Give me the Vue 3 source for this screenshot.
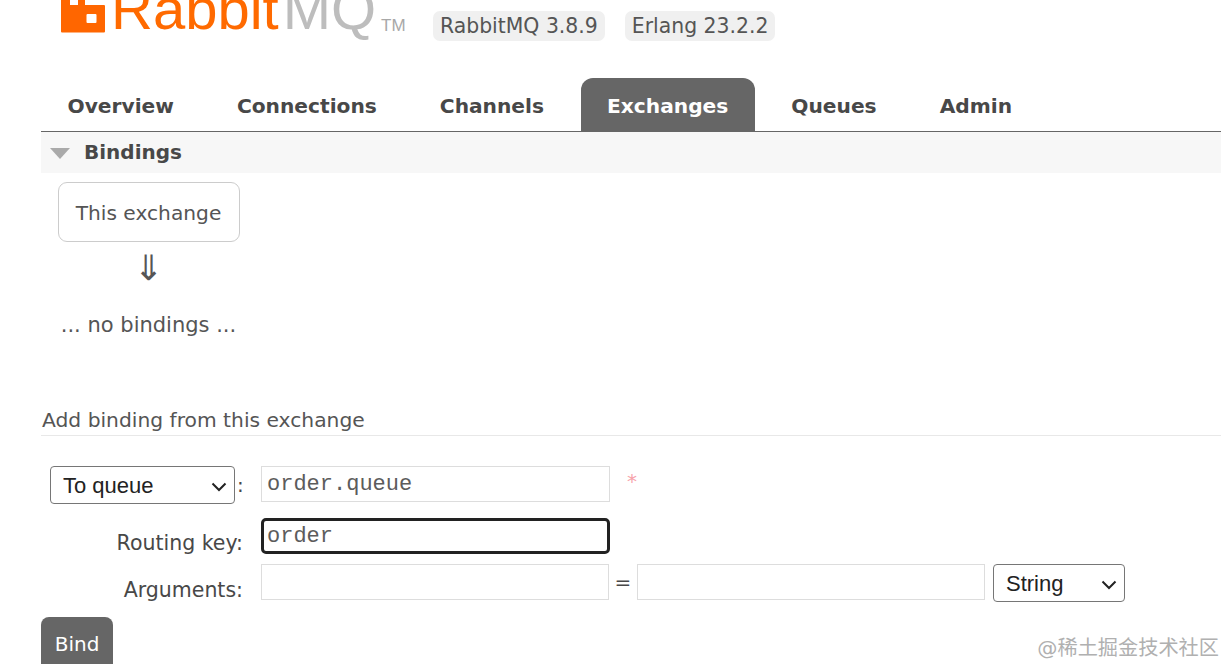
<script setup>
const tabs = [
  { name: 'Overview' },
  { name: 'Connections' },
  { name: 'Channels' },
  { name: 'Exchanges', active: true },
  { name: 'Queues' },
  { name: 'Admin' },
]
</script>

<template>
  <div class="page">
    <header class="head">
      <svg class="mark" width="44" height="34" viewBox="0 0 44 34">
        <path fill="#ff6600" d="M1 0H9V5H17V0H24V5H43a1 1 0 0 1 1 1V31.500a1 1 0 0 1-1 1H1a1 1 0 0 1-1-1V0Z" />
        <rect x="25.500" y="14" width="10" height="9" rx="1" fill="#fff" />
      </svg>
      <span class="brand"><span class="rabbit">Rabbit</span><span class="mq">MQ</span></span>
      <span class="tm">TM</span>
      <span class="ver first">RabbitMQ 3.8.9</span>
      <span class="ver">Erlang 23.2.2</span>
    </header>

    <nav class="tabs">
      <a v-for="t in tabs" :key="t.name" class="tab" :class="{ active: t.active }">{{ t.name }}</a>
    </nav>

    <section class="bar">
      <span class="tri"></span>
      <span class="bar-title">Bindings</span>
    </section>

    <div class="bindings">
      <div class="box">This exchange</div>
      <div class="arrow">⇓</div>
      <div class="none">... no bindings ...</div>
    </div>

    <h3 class="sub">Add binding from this exchange</h3>

    <form class="form" @submit.prevent>
      <div class="row r1">
        <div class="lab">
          <div class="sel-wrap to">
            <select class="sel"><option>To queue</option></select>
            <svg class="chev" width="16" height="10" viewBox="0 0 16 10"><path d="M1.500 1.500L8 8L14.500 1.500" fill="none" stroke="#222" stroke-width="2" /></svg>
          </div>
          <span class="colon">:</span>
        </div>
        <input class="inp" value="order.queue" />
        <span class="req">*</span>
      </div>
      <div class="row r2">
        <label class="lab text">Routing key:</label>
        <input class="inp focus" value="order" />
      </div>
      <div class="row r3">
        <label class="lab text">Arguments:</label>
        <input class="inp narrow" />
        <span class="eq">=</span>
        <input class="inp narrow" />
        <div class="sel-wrap type">
          <select class="sel"><option>String</option></select>
          <svg class="chev" width="16" height="10" viewBox="0 0 16 10"><path d="M1.500 1.500L8 8L14.500 1.500" fill="none" stroke="#222" stroke-width="2" /></svg>
        </div>
      </div>
      <button class="bind" type="button">Bind</button>
    </form>

    <div class="mark-text">@稀土掘金技术社区</div>
  </div>
</template>

<style>
html, body { margin: 0; overflow: hidden; background: #fff; }
</style>

<style scoped>
.page {
  position: relative;
  width: 1221px;
  height: 664px;
  overflow: hidden;
  padding-left: 41px;
  box-sizing: border-box;
  font-family: "DejaVu Sans", sans-serif;
  color: #555;
  background: #fff;
}
.head {
  display: flex;
  align-items: flex-start;
  height: 78px;
  padding-left: 20px;
}
.mark { flex: none; }
.brand {
  flex: none;
  width: 269px;
  font-family: "Liberation Sans", sans-serif;
  font-size: 58px;
  line-height: 60px;
  margin-top: -21px;
  margin-left: 6px;
  height: 60px;
}
.rabbit { color: #ff6a00; margin-right: 4px; }
.mq { color: #bdbdbd; }
.tm {
  flex: none;
  font-family: "Liberation Sans", sans-serif;
  font-size: 17px;
  line-height: 20px;
  color: #a8a8a8;
  margin-top: 16px;
  margin-left: 1px;
  width: 52px;
}
.ver {
  flex: none;
  margin-top: 11px;
  margin-left: 20px;
  height: 30px;
  line-height: 30px;
  padding: 0 7px;
  background: #f0f0f0;
  border-radius: 7px;
  font-size: 20.400px;
}
.ver.first { margin-left: 0; }
.tabs {
  display: flex;
  gap: 10px;
  height: 53px;
  border-bottom: 1px solid #666;
}
.tab {
  height: 53px;
  line-height: 56px;
  padding: 0 26.500px;
  font-size: 20.200px;
  font-weight: bold;
  border-radius: 12px 12px 0 0;
  color: #484848;
}
.tab.active { background: #666; color: #fff; }
.bar {
  display: flex;
  align-items: center;
  height: 41px;
  background: #f7f7f7;
}
.tri {
  width: 0;
  height: 0;
  margin-left: 9px;
  margin-top: 2px;
  border-left: 10px solid transparent;
  border-right: 10px solid transparent;
  border-top: 11px solid #aaa;
}
.bar-title {
  margin-left: 14px;
  margin-bottom: 2px;
  font-size: 20px;
  font-weight: bold;
  color: #484848;
}
.bindings {
  width: 215px;
  display: flex;
  flex-direction: column;
  align-items: center;
  padding-top: 9px;
}
.box {
  box-sizing: border-box;
  width: 182px;
  height: 60px;
  line-height: 60px;
  text-align: center;
  border: 1px solid #ccc;
  border-radius: 9px;
  font-size: 20.200px;
}
.arrow {
  font-size: 35px;
  line-height: 50px;
  margin-top: 1px;
}
.none {
  font-size: 21px;
  line-height: 30px;
  margin-top: 17px;
}
.sub {
  margin: 65px 0 0;
  padding-left: 1px;
  height: 30px;
  line-height: 31px;
  font-size: 20.250px;
  font-weight: normal;
  border-bottom: 1px solid #e8e8e8;
}
.form { display: block; margin-top: 30px; }
.row { display: flex; align-items: flex-start; }
.r1 { height: 38px; }
.r2 { margin-top: 14px; height: 36px; }
.r3 { margin-top: 10px; height: 36px; }
.lab {
  flex: none;
  box-sizing: border-box;
  width: 220px;
  padding-left: 9px;
  display: flex;
  align-items: center;
}
.lab.text {
  display: block;
  padding: 10px 18px 0 0;
  text-align: right;
  font-size: 20.500px;
  line-height: 30px;
  color: #484848;
}
.r3 .lab.text { padding-top: 11px; }
.colon { margin-left: 2px; font-size: 20px; color: #484848; }
.sel-wrap {
  position: relative;
  flex: none;
  height: 38px;
}
.sel-wrap.to { width: 185px; }
.sel-wrap.type { width: 132px; margin-left: 8px; }
.sel {
  display: block;
  appearance: none;
  box-sizing: border-box;
  width: 100%;
  height: 38px;
  background: #fff;
  border: 1px solid #767676;
  border-radius: 4px;
  font-family: "Liberation Sans", sans-serif;
  font-size: 22px;
  color: #222;
  padding: 0 0 0 12px;
  outline: none;
}
.chev {
  position: absolute;
  right: 8px;
  top: 16px;
  pointer-events: none;
}
.inp {
  box-sizing: border-box;
  flex: none;
  width: 349px;
  height: 36px;
  padding: 0 5px;
  border: 1px solid #ddd;
  border-radius: 0;
  outline: none;
  font-family: "Liberation Mono", monospace;
  font-size: 22px;
  color: #5c5c5c;
  background: #fff;
}
.inp.narrow { width: 348px; }
.inp.focus {
  border: 3px solid #222;
  border-radius: 5px;
  padding: 0 3px;
}
.req {
  margin-left: 17px;
  color: #f7a3aa;
  font-size: 20px;
  line-height: 30px;
}
.eq {
  flex: none;
  width: 28px;
  text-align: center;
  font-size: 20px;
  line-height: 36px;
  color: #484848;
}
.bind {
  display: block;
  margin-top: 17px;
  width: 72px;
  height: 60px;
  padding: 0 0 7px;
  border: 0;
  border-radius: 8px;
  background: #666;
  color: #fff;
  font-family: "DejaVu Sans", sans-serif;
  font-size: 20px;
}
.mark-text {
  position: absolute;
  right: 2px;
  bottom: 3px;
  font-family: "DejaVu Sans", "Noto Sans CJK SC", sans-serif;
  font-size: 20.200px;
  line-height: 26px;
  color: #b0b0b0;
}
</style>
